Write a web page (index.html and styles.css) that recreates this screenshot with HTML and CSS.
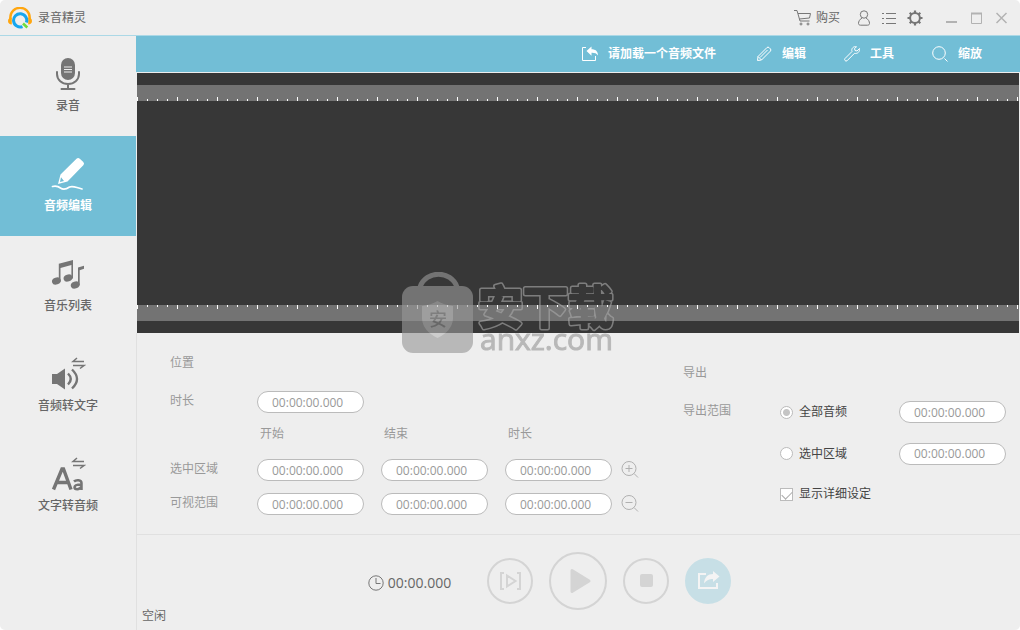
FILE: index.html
```html
<!DOCTYPE html>
<html lang="zh-CN">
<head>
<meta charset="utf-8">
<title>录音精灵</title>
<link rel="stylesheet" href="styles.css">
</head>
<body>
<div class="window">
  <header class="titlebar">
    <svg class="logo" viewBox="0 0 24 22" width="24" height="22">
      <path d="M2.300 12V10.500a9.700 9.700 0 0 1 19.400 0V12" fill="none" stroke="#ffa60f" stroke-width="2.400"/>
      <path d="M3.800 10.500v7C1.500 17.500 0 16.200 0 14s1.500-3.500 3.800-3.500zM20.200 10.500v7c2.300 0 3.800-1.300 3.800-3.500s-1.500-3.500-3.800-3.500z" fill="#ffa60f"/>
      <path d="M14.500 19.600a6.600 6.600 0 1 1 3.900-4" fill="none" stroke="#16a6ee" stroke-width="3"/>
      <path d="M15 16.500l4.300 4" fill="none" stroke="#6fdc3c" stroke-width="2.600"/>
    </svg>
    <h1 class="title">录音精灵</h1>
    <div class="title-actions">
      <button class="plain buy"><svg viewBox="0 0 18 16" width="18" height="16" class="line gray"><path d="M0 .5h3l3 10.500h9.500M4 3.500h12.500l-1 4.500-10.200 1"/><circle cx="7" cy="14" r="1"/><circle cx="14" cy="14" r="1"/></svg><span>购买</span></button>
      <button class="plain" aria-label="账户"><svg viewBox="0 0 14 16" width="14" height="16" class="line gray"><circle cx="7" cy="4.500" r="3.700"/><path d="M5 8C2.500 9.500 1.500 11.500 1.500 13.500c0 1 .8 1.700 2 1.700h7c1.200 0 2-.7 2-1.700 0-2-1-4-3.500-5.500"/></svg></button>
      <button class="plain" aria-label="菜单"><svg viewBox="0 0 14 14" width="14" height="14" class="line gray"><path d="M0 2.500h2M4 2.500h10M0 7.500h2M4 7.500h10M0 12.500h2M4 12.500h10"/></svg></button>
      <button class="plain" aria-label="设置"><svg viewBox="0 0 16 16" width="16" height="16" fill="none" stroke="#757575"><circle cx="8" cy="8" r="4.900" stroke-width="2"/><path d="M8 .5v2.500M8 13v2.500M.5 8H3M13 8h2.500M2.700 2.700l1.800 1.800M11.500 11.500l1.800 1.800M2.700 13.300l1.800-1.800M11.500 4.500l1.800-1.800" stroke-width="2.200"/></svg></button>
    </div>
    <div class="window-actions">
      <button class="plain" aria-label="最小化"><svg viewBox="0 0 12 12" width="12" height="12" class="win"><path d="M0 10h11"/></svg></button>
      <button class="plain" aria-label="最大化"><svg viewBox="0 0 12 12" width="12" height="12" class="win"><path d="M0 1.500h11" stroke-width="2"/><path d="M.5 1v10.500h10V1" stroke-width="1"/></svg></button>
      <button class="plain" aria-label="关闭"><svg viewBox="0 0 12 12" width="12" height="12" class="win close"><path d="M.5 1l10 10M10.500 1l-10 10"/></svg></button>
    </div>
  </header>

  <div class="body">
    <nav class="sidebar">
      <button class="nav-item">
        <svg viewBox="0 0 36 36" width="36" height="36"><rect x="11" y="2" width="14" height="22" rx="7" fill="#757575"/><path d="M14 11h8M14 13.500h8M14 16h8" stroke="#eee" stroke-width="1.200"/><path d="M7 16v2c0 6 5 10 11 10s11-4 11-10v-2M18 28v5M11.500 33h13" fill="none" stroke="#757575" stroke-width="2" stroke-linecap="round"/></svg>
        <span>录音</span>
      </button>
      <button class="nav-item active">
        <svg viewBox="0 0 36 36" width="36" height="36"><path fill="#fff" fill-rule="evenodd" d="M8 28L10.500 18.500 26.500 2.800q1.600-1.500 3.300 0L33.300 6q1.600 1.700 0 3.300L17.500 25.500zM10 26l4-1-3-3.800z"/><path d="M2.500 30.500c4-1 6 0 8 1.500 3 2 6 1 9-1 4-1.500 6 .5 12.500 2" fill="none" stroke="#fff" stroke-width="1.700" stroke-linecap="round"/></svg>
        <span>音频编辑</span>
      </button>
      <button class="nav-item">
        <svg viewBox="0 0 36 36" width="36" height="36"><g fill="#757575"><ellipse cx="6.400" cy="25" rx="4.500" ry="3.500" transform="rotate(-18 6.400 25)"/><ellipse cx="18" cy="22" rx="4.500" ry="3.500" transform="rotate(-18 18 22)"/><ellipse cx="25.200" cy="29" rx="4.500" ry="3.500" transform="rotate(-18 25.200 29)"/><path d="M8.800 7.800L23 4v18.500h-1.600V9L10.500 12v13.500H8.800zM28 11.500l6-1.800v3l-4.300 1.500v15H28z"/></g></svg>
        <span>音乐列表</span>
      </button>
      <button class="nav-item">
        <svg viewBox="0 0 36 36" width="36" height="36"><path d="M2 18h5l8-5.500v21L7 28H2z" fill="#757575"/><path d="M18 17.500q5.500 5.500 0 11M22 13.500q10 9.500 0 19" fill="none" stroke="#757575" stroke-width="2.400"/><path d="M34 5.500H23l4-3.500M23 9.500h11l-4 3" fill="none" stroke="#757575" stroke-width="1.500"/></svg>
        <span>音频转文字</span>
      </button>
      <button class="nav-item">
        <svg viewBox="0 0 36 36" width="36" height="36"><path d="M3.500 33.500L12 13h1.500L21 33.500M7 26.500h11.500" fill="none" stroke="#757575" stroke-width="3.400"/><path d="M24 25.500c2-2 7.500-2 7.500 1.500v7M31.500 28.500c-4 0-7 .3-7 2.700s5 3 7-.5" fill="none" stroke="#757575" stroke-width="2.500"/><path d="M34 5.500H23l4-3.500M23 9.500h11l-4 3" fill="none" stroke="#757575" stroke-width="1.500"/></svg>
        <span>文字转音频</span>
      </button>
    </nav>

    <main class="main">
      <div class="toolbar">
        <button class="tool"><svg viewBox="0 0 16 16" width="16" height="16"><path d="M4 1.500H.5v13h13V10" fill="none" stroke="#fff"/><path d="M4.500 5L9.500.5v2.800c4 0 6.500 2 6.500 6.200-1.500-2.300-3.500-2.800-6.500-2.700v3z" fill="#fff"/></svg><span>请加载一个音频文件</span></button>
        <button class="tool"><svg viewBox="0 0 16 16" width="16" height="16" class="line white"><path d="M1.500 14.500l.5-4L11 1.500q1-.8 2 0l1.500 1.500q.8 1 0 2L5.500 14zM2 10.500L5.500 14M4 11.500l7.500-7.500"/></svg><span>编辑</span></button>
        <button class="tool"><svg viewBox="0 0 16 16" width="16" height="16" class="line white"><path d="M12.500.8C9.500 0 7 2.500 8 5.500l-7 7q-.8 1 0 2t2 .3l7.500-7.500c3 .8 5.500-1.600 5-4.800L13 5l-2-.5-.5-2z"/></svg><span>工具</span></button>
        <button class="tool"><svg viewBox="0 0 16 16" width="16" height="16" class="line white"><circle cx="7" cy="7" r="6.300"/><path d="M12.500 12.500l3 3"/></svg><span>缩放</span></button>
      </div>

      <section class="editor" aria-label="波形">
        <div class="ruler ruler-top"></div>
        <div class="wave"></div>
        <div class="ruler ruler-bottom"></div>
        <div class="watermark">
          <svg viewBox="0 0 216 92" width="216" height="92">
            <defs><mask id="hollow"><rect width="216" height="92" fill="#fff"/><text x="76" y="52" class="mark mark-in">安下载</text></mask></defs>
            <path d="M18 15C24-2 49-2 55 15" fill="none" stroke="#989898" stroke-width="5"/>
            <rect x="0" y="14" width="71" height="67" rx="11" fill="#989898"/>
            <path d="M20 34q9-1 15.500-5Q42 33 51 34v13q-1 12-15.500 19Q21 59 20 47z" fill="#b9b9b9"/>
            <text x="27" y="54" class="badge">安</text>
            <g mask="url(#hollow)"><text x="76" y="52" class="mark mark-out">安下载</text></g>
            <text x="78" y="78" class="site">anxz.com</text>
          </svg>
        </div>
      </section>

      <section class="settings">
        <div class="position">
          <h2 class="caption">位置</h2>
          <label class="caption c1" for="total">时长</label>
          <input class="time wide" id="total" value="00:00:00.000">
          <span class="caption head c2">开始</span>
          <span class="caption head">结束</span>
          <span class="caption head wide-head">时长</span>
          <span class="caption c1">选中区域</span>
          <input class="time" aria-label="选中区域 开始" value="00:00:00.000">
          <input class="time" aria-label="选中区域 结束" value="00:00:00.000">
          <input class="time" aria-label="选中区域 时长" value="00:00:00.000">
          <button class="plain" aria-label="放大"><svg viewBox="0 0 18 18" width="18" height="18" class="line pale"><circle cx="8" cy="7.500" r="7"/><path d="M4.500 7.500h7M8 4v7M13 12.500l4 4"/></svg></button>
          <span class="caption c1">可视范围</span>
          <input class="time" aria-label="可视范围 开始" value="00:00:00.000">
          <input class="time" aria-label="可视范围 结束" value="00:00:00.000">
          <input class="time" aria-label="可视范围 时长" value="00:00:00.000">
          <button class="plain" aria-label="缩小"><svg viewBox="0 0 18 18" width="18" height="18" class="line pale"><circle cx="8" cy="7.500" r="7"/><path d="M4.500 7.500h7M13 12.500l4 4"/></svg></button>
        </div>
        <div class="export">
          <h2 class="caption">导出</h2>
          <span class="caption c1">导出范围</span>
          <label class="choice"><input type="radio" name="range" checked>全部音频</label>
          <input class="time" aria-label="全部音频" value="00:00:00.000">
          <label class="choice c2"><input type="radio" name="range">选中区域</label>
          <input class="time" aria-label="选中区域" value="00:00:00.000">
          <label class="choice detail"><input type="checkbox" checked>显示详细设定</label>
        </div>
      </section>

      <footer class="player">
        <div class="controls">
          <div class="clock"><svg viewBox="0 0 16 16" width="16" height="16" class="line gray"><circle cx="8" cy="8" r="7.200"/><path d="M8 3v5.500h4.500"/></svg><span>00:00.000</span></div>
          <button class="round" aria-label="播放选区"><svg viewBox="0 0 24 20" width="24" height="20" fill="none" stroke="#d4d4d4" stroke-width="2"><path d="M6 2H3v16h3M19 2h3v16h-3M9 4.500v11l8.500-5.500z"/></svg></button>
          <button class="round large" aria-label="播放"><svg viewBox="0 0 24 26" width="24" height="26"><path d="M4 2.500v21L21 13z" fill="#d4d4d4" stroke="#d4d4d4" stroke-width="3" stroke-linejoin="round"/></svg></button>
          <button class="round" aria-label="停止"><svg viewBox="0 0 14 14" width="14" height="14"><rect x="1" width="13" height="13" rx="2" fill="#d4d4d4"/></svg></button>
          <button class="round share" aria-label="导出"><svg viewBox="0 0 24 20" width="24" height="20"><path d="M10 3H3v14h18v-5" fill="none" stroke="#f4f4f4" stroke-width="2"/><path d="M8 12.500C8.500 6 12 3 17 3V0l6.500 5.500L17 11V8c-4 0-6 1-9 4.500z" fill="#f4f4f4"/></svg></button>
        </div>
        <div class="status">空闲</div>
      </footer>
    </main>
  </div>
</div>
</body>
</html>
```
FILE: styles.css
```css
* { box-sizing: border-box; }

body {
  margin: 0;
  background: #fff;
  color: #666;
  font: 12px/16px "Open Sans", "Noto Sans CJK SC", sans-serif;
}

button, input { font: inherit; color: inherit; }
svg { display: block; flex: none; }

.window {
  display: flex;
  flex-direction: column;
  min-height: 100vh;
  background: #eee;
  border-radius: 5px;
  overflow: hidden;
}

.plain {
  display: flex;
  align-items: center;
  padding: 0;
  border: 0;
  background: none;
}

.line { fill: none; stroke-width: 1; }
.gray { stroke: #777; }
.white { stroke: #fff; }
.pale { stroke: #b0b0b0; }
.win { fill: none; stroke: #b2b2b2; stroke-width: 2; }
.close { stroke-width: 1.5; }

/* Title bar */
.titlebar {
  display: flex;
  align-items: center;
  height: 36px;
  padding: 0 12px 0 8px;
  border-bottom: 1px solid #abd8e6;
}
.title { margin: 0 auto 0 6px; font-size: 12px; font-weight: 400; }
.title-actions { display: flex; align-items: center; gap: 11px; margin-right: 23px; }
.buy { gap: 4px; margin-right: 6px; }
.window-actions { display: flex; gap: 13px; }

/* Sidebar */
.body { display: flex; flex: 1; }
.sidebar { width: 136px; flex: none; }
.nav-item {
  display: flex;
  flex-direction: column;
  align-items: center;
  gap: 6px;
  width: 100%;
  height: 100px;
  padding: 20px 0 0;
  border: 0;
  background: none;
  font-weight: 500;
}
.nav-item.active { background: #72bed6; color: #fff; font-weight: 700; }

.main { display: flex; flex: 1; flex-direction: column; min-width: 0; }

/* Toolbar */
.toolbar {
  display: flex;
  justify-content: flex-end;
  gap: 38px;
  height: 36px;
  padding-right: 38px;
  background: #72bed6;
}
.tool {
  display: flex;
  align-items: center;
  gap: 10px;
  padding: 0;
  border: 0;
  background: none;
  color: #fff;
  font-weight: 700;
}
.tool:first-child { margin-right: 2px; }

/* Waveform */
.editor {
  position: relative;
  margin: 1px 1px 0;
  padding: 12px 0;
  background: #373737;
}
.wave { height: 204px; }
.ruler {
  height: 16px;
  background-color: #737373;
  background-image:
    linear-gradient(90deg, #fff 1px, transparent 1px),
    linear-gradient(90deg, #fff 1px, transparent 1px);
  background-size: 10px 2px, 40px 4px;
  background-repeat: repeat-x;
}
.ruler-top { background-position: left bottom; }
.ruler-bottom { background-position: left top; }

.watermark {
  position: absolute;
  top: 199px;
  left: 30%;
  z-index: 1;
  opacity: 0.62;
  pointer-events: none;
}
.mark { font: 700 45px "Noto Sans CJK SC", sans-serif; stroke-linejoin: round; }
.mark-out { fill: #a8a8a8; stroke: #a8a8a8; stroke-width: 5px; }
.mark-in { fill: #000; stroke: #000; stroke-width: 2px; }
.badge { font: 500 18px "Noto Sans CJK SC", sans-serif; fill: #858585; }
.site { font: 30px "Open Sans", sans-serif; fill: #989898; stroke: #989898; stroke-width: 1px; }

/* Settings */
.settings {
  display: flex;
  justify-content: space-between;
  padding: 9px 14px 13px 33px;
  border-left: 1px solid #e0e0e0;
  border-bottom: 1px solid #e0e0e0;
}
.position {
  display: grid;
  grid-template-columns: 87px 124px 124px 116px 18px;
  grid-template-rows: 40px 40px 31px 34px 34px;
  align-items: center;
}
.export {
  display: grid;
  grid-template-columns: 97px 119px 107px;
  grid-template-rows: 40px 40px 43px 38px;
  align-items: center;
  padding-top: 10px;
}
.caption { margin: 0; color: #999; font-size: 12px; font-weight: 400; }
h2.caption { grid-column: 1 / -1; padding-top: 2px; }
.c1 { grid-column: 1; padding-bottom: 2px; }
.c2 { grid-column: 2; }
.wide { grid-column: 2 / -1; }
.head { align-self: start; padding: 4px 3px; }
.wide-head { grid-column: 4 / -1; }
.time {
  width: 107px;
  height: 22px;
  padding: 0 14px;
  border: 1px solid #bbb;
  border-radius: 11px;
  background: #fff;
  color: #999;
}

.choice { display: flex; align-items: center; gap: 6px; color: #444; }
.choice input {
  appearance: none;
  width: 13px;
  height: 13px;
  margin: 0;
  border: 1px solid #bbb;
  background: #fff;
}
.choice input[type="radio"] { border-radius: 50%; }
.choice input[type="radio"]:checked {
  background: radial-gradient(circle, #c4c4c4 3px, #fff 4px);
}
.choice input[type="checkbox"]:checked::before {
  content: "";
  display: block;
  width: 9px;
  height: 5px;
  margin: 2px 1px;
  border: solid #aaa;
  border-width: 0 0 1px 1px;
  transform: rotate(-45deg);
}
.detail { grid-column: 2 / -1; }

/* Player */
.player {
  display: flex;
  flex: 1;
  flex-direction: column;
  padding-top: 17px;
  border-left: 1px solid #e0e0e0;
}
.controls {
  display: flex;
  align-items: center;
  justify-content: center;
  gap: 16px;
  padding-right: 58px;
}
.clock {
  display: flex;
  align-items: center;
  gap: 4px;
  margin-right: 20px;
  padding-top: 3px;
  font-size: 14px;
}
.round {
  display: flex;
  align-items: center;
  justify-content: center;
  width: 46px;
  height: 46px;
  padding: 0;
  border: 2px solid #d4d4d4;
  border-radius: 50%;
  background: none;
}
.large { width: 58px; height: 58px; padding-left: 4px; }
.share { border-color: #c7dfe6; background: #c7dfe6; }
.status { padding-left: 5px; line-height: 12px; }
```
